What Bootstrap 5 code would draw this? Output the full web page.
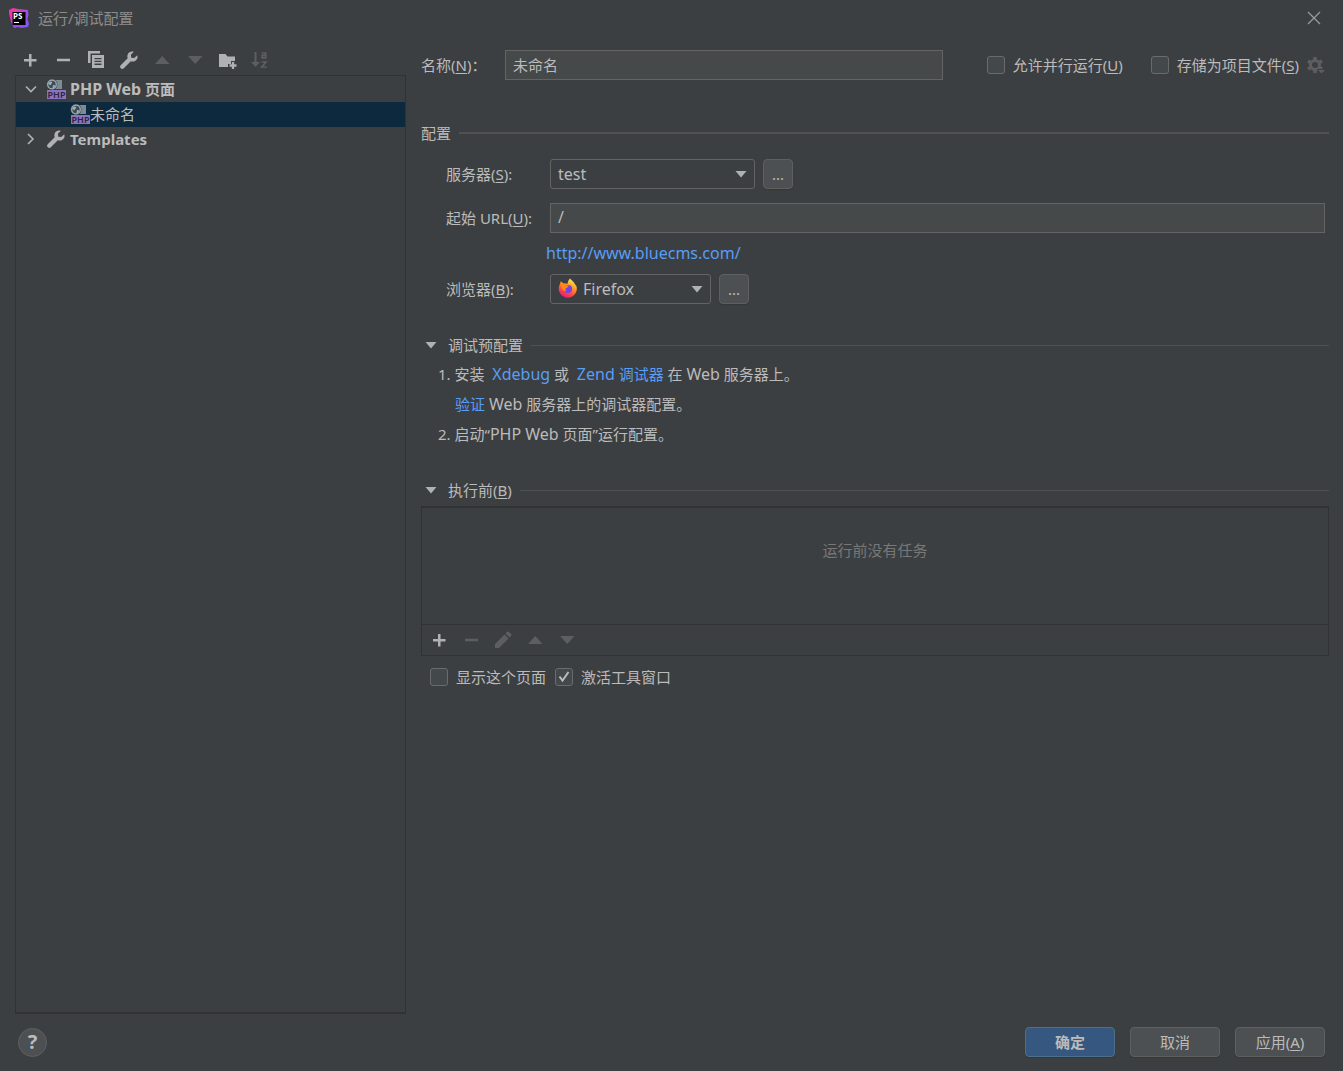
<!DOCTYPE html>
<html lang="zh-CN">
<head>
<meta charset="utf-8">
<meta name="viewport" content="width=device-width, initial-scale=1">
<title>运行/调试配置</title>
<link href="https://cdn.jsdelivr.net/npm/bootstrap@5.3.0/dist/css/bootstrap.min.css" rel="stylesheet">
<style>
:root{--panel:#3c3f41;--line:#323232;--edge:#646464;--field:#45494a;--ink:#bbbbbb;--link:#589df6;--dim:#5c5e5f}
body{background:var(--panel);color:var(--ink);font:15px/20px "Noto Sans","Noto Sans CJK SC",sans-serif;min-height:100vh}
svg{display:block;flex:none}
a{color:var(--link);text-decoration:none}
a:hover{color:var(--link);text-decoration:underline}
u{text-underline-offset:2px}
.latin{font-size:16px}
.titlebar{height:36px;padding:0 20px 0 9px;color:#8c8c8c}
.icon-btn{background:none;border:0;padding:0;color:#afb1b3}
.icon-btn:disabled{color:var(--dim)}
.dialog-body{gap:15px;padding:0 14px 0 15px}
.side{width:391px}
.side-tools{height:39px;gap:13px;padding:8px 5px 0}
.tree{border:1px solid var(--line);border-bottom-width:2px}
.tree-row{height:25px;padding:0 0 2px 5px}
.tree-row:first-child{height:26px;padding-bottom:0}
.tree-row.picked{background:#0d293e;padding-left:54px}
.tree-head{font-weight:700}
.tree-icon{margin:0 4px 0 5px}
.name-row{height:30px;margin-top:14px}
.field{background:var(--field);border:1px solid var(--edge);color:var(--ink);height:30px;padding:0 7px 2px;border-radius:0;outline:0;min-width:0}
.name-label{width:84px}
.name-input{width:438px}
.tick{appearance:none;width:18px;height:18px;margin:0;background:#43494a;border:1px solid #6b6b6b;border-radius:3px;flex:none}
.tick:checked{background:#43494a url("data:image/svg+xml,%3Csvg xmlns='http://www.w3.org/2000/svg' viewBox='0 0 16 16'%3E%3Cpath d='M3.500 7.500 6.500 11.500 12.500 3' fill='none' stroke='%23bbbbbb' stroke-width='2'/%3E%3C/svg%3E") center/16px}
.options{gap:28px;padding-right:4px}
.option{gap:8px}
.rule{height:1px;background:#515151;flex:1}
.rule-strong{height:2px}
.sec-title{margin-top:43px;margin-bottom:16px}
.form-grid{padding:0 4px 0 25px}
.form-grid label{width:104px;flex:none;padding-bottom:1px}
.f-row{margin-bottom:14px}
.picker{position:relative}
.pick-server{width:205px}
.pick-browser{width:161px}
.picker select{appearance:none;display:block;width:100%;height:30px;background:transparent;border:1px solid var(--edge);border-radius:3px;color:var(--ink);padding:0 24px 0 7px;outline:0}
.picker svg{position:absolute;pointer-events:none}
.picker .arrow{right:8px;top:11px}
.picker .logo{left:8px;top:4px}
.picker select.with-logo{padding-left:32px}
.url-line{padding-left:100px;margin:-4px 0 11px}
.push{background:#4c5052;border:1px solid #5e6060;border-radius:4px;color:var(--ink);height:30px;padding:0;box-shadow:0 1px 1px #353739}
.push-dots{width:30px}
.push-wide{width:90px}
.push-main{background:#365880;border-color:#4c708c;font-weight:700}
.sec-debug,.sec-before{margin-top:31px}
.fold{padding-left:4px;gap:8px}
.fold-arrow{margin-right:3px}
.steps{margin-top:4px;padding-left:17px}
.steps div{height:30px;line-height:30px}
.steps .indent{padding-left:17px}
.task-box{margin-top:6px;border:1px solid var(--line);border-top-width:2px}
.task-list{height:116px;padding-top:32px;color:#787878}
.task-tools{height:31px;border-top:1px solid var(--line);padding:0 7px;gap:12px}
.show-row{padding:11px 9px;gap:9px}
.footer{height:57px;padding:0 18px 1px}
.footer-actions{gap:15px}
.help{width:29px;height:29px;border-radius:50%;background:#4c5052;border:1px solid #5e6060;color:var(--ink);font:700 20px/20px "Noto Sans",sans-serif;padding:0}
</style>
<script src="https://cdn.jsdelivr.net/npm/bootstrap@5.3.0/dist/js/bootstrap.bundle.min.js"></script>
</head>
<body class="d-flex flex-column">
<svg width="0" height="0" class="position-absolute" aria-hidden="true">
  <defs>
    <linearGradient id="lg" x1="0" y1="0" x2="1" y2="1"><stop offset="0" stop-color="#ff318c"/><stop offset=".35" stop-color="#d63fc4"/><stop offset=".6" stop-color="#9a4cf5"/><stop offset="1" stop-color="#765af8"/></linearGradient>
    <linearGradient id="fx" x1=".8" y1="0" x2=".3" y2="1"><stop offset="0" stop-color="#fff44f"/><stop offset=".35" stop-color="#ffa42b"/><stop offset=".7" stop-color="#ff4a3d"/><stop offset="1" stop-color="#e31587"/></linearGradient>
    <symbol id="i-plus" viewBox="0 0 20 20"><path d="M10.250 4v12.500M4 10.250h12.500" stroke="currentColor" stroke-width="2.500"/></symbol>
    <symbol id="i-minus" viewBox="0 0 20 20"><path d="M4 10h13" stroke="currentColor" stroke-width="2.500"/></symbol>
    <symbol id="i-copy" viewBox="0 0 20 20"><path d="M2 13V1h12v2.500H4.500V13z" fill="currentColor"/><path d="M6 5h12v13H6zM8.500 8v1.300h7V8zm0 2.800v1.300h7v-1.300zm0 2.800v1.300h7v-1.300z" fill="currentColor" fill-rule="evenodd"/></symbol>
    <symbol id="i-wrench" viewBox="0 0 20 20"><path d="M18.200 5.200 15.300 8.100 12.300 7.700 11.900 4.700 14.800 1.800C12.300 1 9.800 2 8.800 4.200 8.200 5.500 8.300 7 8.700 8.200L1.700 15.200a2.100 2.100 0 0 0 3.100 3.100L11.800 11.300C14.500 12.200 17.300 11 18.300 8.500 18.700 7.400 18.700 6.300 18.200 5.200z" fill="currentColor"/></symbol>
    <symbol id="i-up" viewBox="0 0 20 20"><path d="M3 14h14.500L10.250 6z" fill="currentColor"/></symbol>
    <symbol id="i-down" viewBox="0 0 20 20"><path d="M3 6h14.500L10.250 14z" fill="currentColor"/></symbol>
    <symbol id="i-folder" viewBox="0 0 20 20"><path d="M1 4h6.500l2 2.500H17V11h-4v3h-3v3H1z" fill="currentColor"/><path d="M15 12v7M11.500 15.500h7" stroke="currentColor" stroke-width="2.300"/></symbol>
    <symbol id="i-sort" viewBox="0 0 20 20"><path d="M4.500 2v11" stroke="currentColor" stroke-width="2"/><path d="M0 12h9l-4.500 5z" fill="currentColor"/><path d="M10.700 3h4v5.500M14.700 5.300h-3.500v2.500h3.500M10.500 12h4.500L10.700 17h5" fill="none" stroke="currentColor" stroke-width="1.700"/></symbol>
    <symbol id="i-pencil" viewBox="0 0 20 20"><path d="M2 14 11.500 4.500l4 4L6 18H2zM12.600 3.400 14 2q1-1 2 0l2 2q1 1 0 2l-1.400 1.400z" fill="currentColor"/></symbol>
    <symbol id="i-php" viewBox="0 0 20 20"><path d="M8 1h8v9H8z" fill="#7e8b93"/><circle cx="6" cy="5.500" r="5.500" fill="#3c4a52"/><circle cx="6" cy="5.500" r="4.300" fill="none" stroke="#a3afb7" stroke-width="1.300"/><path d="M2 4 4.500 2.500 6.500 3 5 5.500 4 6.500zM7 6l2.500.5L8 9 6.500 9.500z" fill="#a3afb7"/><path d="M1 11h19v9H1z" fill="#8c74bd"/><text x="10.500" y="19" text-anchor="middle" font-family="Noto Sans,sans-serif" font-size="9" font-weight="600" fill="#2d2542">PHP</text></symbol>
    <symbol id="i-tri" viewBox="0 0 12 8"><path d="M0.500 1h11L6 7.500z" fill="#afb1b3"/></symbol>
  </defs>
</svg>

<header class="titlebar d-flex align-items-center">
  <svg width="21" height="21" viewBox="0 0 21 21"><path d="M0 2 4 0l5 1 10 1 .5 5-1 4 1.500 5-1 3-7 1-3-1-4 1-3-6L0 5z" fill="url(#lg)"/><path d="M3.500 4h13v13h-13z" fill="#000"/><text x="4" y="11" font-family="Noto Sans,sans-serif" font-size="8" font-weight="700" fill="#fff">PS</text><path d="M5 14h5v1H5z" fill="#fff"/></svg>
  <span class="ms-2">运行/调试配置</span>
  <button class="icon-btn ms-auto" aria-label="关闭"><svg width="18" height="18" viewBox="0 0 18 18"><path d="m3 3 12 12M15 3 3 15" stroke="#9a9c9d" stroke-width="1.200"/></svg></button>
</header>

<div class="dialog-body d-flex flex-grow-1">
  <aside class="side d-flex flex-column flex-shrink-0">
    <div class="side-tools d-flex align-items-center">
      <button class="icon-btn" aria-label="添加"><svg width="20" height="20"><use href="#i-plus"/></svg></button>
      <button class="icon-btn" aria-label="移除"><svg width="20" height="20"><use href="#i-minus"/></svg></button>
      <button class="icon-btn" aria-label="复制"><svg width="20" height="20"><use href="#i-copy"/></svg></button>
      <button class="icon-btn" aria-label="编辑模板"><svg width="20" height="20"><use href="#i-wrench"/></svg></button>
      <button class="icon-btn" aria-label="上移" disabled><svg width="20" height="20"><use href="#i-up"/></svg></button>
      <button class="icon-btn" aria-label="下移" disabled><svg width="20" height="20"><use href="#i-down"/></svg></button>
      <button class="icon-btn" aria-label="新建文件夹"><svg width="20" height="20"><use href="#i-folder"/></svg></button>
      <button class="icon-btn" aria-label="排序" disabled><svg width="20" height="20"><use href="#i-sort"/></svg></button>
    </div>
    <div class="tree flex-grow-1">
      <div class="tree-row tree-head d-flex align-items-center">
        <svg width="20" height="20" viewBox="0 0 20 20"><path d="m5 7.500 5 5 5-5" fill="none" stroke="#afb1b3" stroke-width="1.600"/></svg>
        <svg width="20" height="20" class="tree-icon"><use href="#i-php"/></svg><span><span class="latin">PHP Web</span> 页面</span>
      </div>
      <div class="tree-row picked d-flex align-items-center"><svg width="20" height="20"><use href="#i-php"/></svg>未命名</div>
      <div class="tree-row tree-head d-flex align-items-center">
        <svg width="20" height="20" viewBox="0 0 20 20"><path d="m7 5 5 5-5 5" fill="none" stroke="#afb1b3" stroke-width="1.600"/></svg>
        <svg width="20" height="20" class="tree-icon" color="#afb1b3"><use href="#i-wrench"/></svg>Templates
      </div>
    </div>
  </aside>

  <main class="flex-grow-1">
    <div class="name-row d-flex align-items-center">
      <label class="name-label" for="name">名称(<u>N</u>)：</label>
      <input class="field name-input" id="name" value="未命名">
      <div class="options d-flex align-items-center ms-auto">
        <div class="option d-flex align-items-center"><input type="checkbox" class="tick" id="par"><label for="par">允许并行运行(<u>U</u>)</label></div>
        <div class="option d-flex align-items-center"><input type="checkbox" class="tick" id="store"><label for="store">存储为项目文件(<u>S</u>)</label>
        <button class="icon-btn" aria-label="存储选项" disabled><svg width="18" height="20" viewBox="0 0 18 20"><g fill="none" stroke="currentColor"><circle cx="8" cy="10" r="4.500" stroke-width="3"/><path d="M8 2v3M8 15v3M1 6l2.600 1.500M12.400 12.500 15 14M1 14l2.600-1.500M12.400 7.500 15 6" stroke-width="3.500"/></g><path d="M10 14h8l-4 5z" fill="#3c3f41"/><path d="M11 15h7l-3.500 3.500z" fill="currentColor"/></svg></button></div>
      </div>
    </div>

    <section>
      <div class="d-flex align-items-center gap-2 sec-title"><span>配置</span><span class="rule rule-strong"></span></div>
      <div class="form-grid">
        <div class="d-flex align-items-center f-row"><label for="server">服务器(<u>S</u>):</label>
          <div class="picker pick-server"><select id="server" class="latin"><option>test</option></select><svg class="arrow" width="12" height="8"><use href="#i-tri"/></svg></div>
          <button class="push push-dots ms-2" aria-label="管理服务器">...</button></div>
        <div class="d-flex align-items-center f-row"><label for="url">起始 URL(<u>U</u>):</label><input class="field latin flex-grow-1" id="url" value="/"></div>
        <div class="url-line"><a href="#" class="latin">http://www.bluecms.com/</a></div>
        <div class="d-flex align-items-center"><label for="browser">浏览器(<u>B</u>):</label>
          <div class="picker pick-browser"><svg class="logo" width="20" height="21" viewBox="0 0 21 21"><path d="M12.500 0q5 4 7 8.500A9.500 9.500 0 1 1 1.500 7L3 3l2.500 2 4.500.5q.5-3.500 2.500-5.500z" fill="url(#fx)"/><circle cx="10.500" cy="11" r="4.300" fill="#7542e5"/><path d="M2 6q4-2 6 1l3.500.5q-1 2-3 2.500-2 2 1 3.500-5 0-5.500-4z" fill="#ff8a16"/></svg>
            <select id="browser" class="with-logo latin"><option>Firefox</option></select><svg class="arrow" width="12" height="8"><use href="#i-tri"/></svg></div>
          <button class="push push-dots ms-2" aria-label="管理浏览器">...</button></div>
      </div>
    </section>

    <section class="sec-debug">
      <div class="d-flex align-items-center fold"><svg class="fold-arrow" width="12" height="8"><use href="#i-tri"/></svg><span>调试预配置</span><span class="rule"></span></div>
      <div class="steps">
        <div>1. 安装&nbsp; <a href="#" class="latin">Xdebug</a> 或&nbsp; <a href="#"><span class="latin">Zend</span> 调试器</a> 在 <span class="latin">Web</span> 服务器上。</div>
        <div class="indent"><a href="#">验证</a> <span class="latin">Web</span> 服务器上的调试器配置。</div>
        <div>2. 启动“<span class="latin">PHP Web</span> 页面”运行配置。</div>
      </div>
    </section>

    <section class="sec-before">
      <div class="d-flex align-items-center fold"><svg class="fold-arrow" width="12" height="8"><use href="#i-tri"/></svg><span>执行前(<u>B</u>)</span><span class="rule"></span></div>
      <div class="task-box">
        <div class="task-list text-center">运行前没有任务</div>
        <div class="task-tools d-flex align-items-center">
          <button class="icon-btn" aria-label="添加任务"><svg width="20" height="20"><use href="#i-plus"/></svg></button>
          <button class="icon-btn" aria-label="移除任务" disabled><svg width="20" height="20"><use href="#i-minus"/></svg></button>
          <button class="icon-btn" aria-label="编辑任务" disabled><svg width="20" height="20"><use href="#i-pencil"/></svg></button>
          <button class="icon-btn" aria-label="任务上移" disabled><svg width="20" height="20"><use href="#i-up"/></svg></button>
          <button class="icon-btn" aria-label="任务下移" disabled><svg width="20" height="20"><use href="#i-down"/></svg></button>
        </div>
      </div>
      <div class="d-flex align-items-center show-row">
        <div class="option d-flex align-items-center"><input type="checkbox" class="tick" id="show"><label for="show">显示这个页面</label></div>
        <div class="option d-flex align-items-center"><input type="checkbox" class="tick" id="act" checked><label for="act">激活工具窗口</label></div>
      </div>
    </section>
  </main>
</div>

<footer class="footer d-flex align-items-center">
  <button class="help" aria-label="帮助">?</button>
  <div class="footer-actions d-flex ms-auto">
    <button class="push push-wide push-main">确定</button>
    <button class="push push-wide">取消</button>
    <button class="push push-wide">应用(<u>A</u>)</button>
  </div>
</footer>
</body>
</html>
